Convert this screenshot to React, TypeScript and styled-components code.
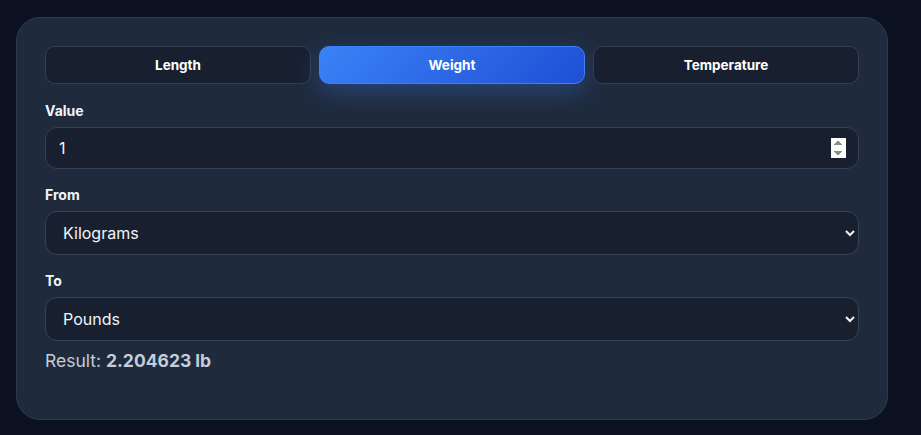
import { useState } from 'react';
import styled, { createGlobalStyle } from 'styled-components';

const GlobalStyle = createGlobalStyle`
  html, body {
    margin: 0;
    padding: 0;
    background: #0b1120;
  }
  body {
    font-family: Inter, "Noto Sans", "Liberation Sans", sans-serif;
    color: #f1f5f9;
  }
`;

const Page = styled.div`
  min-height: 435px;
  padding: 17px 33px 0 16px;
  box-sizing: border-box;
`;

const Card = styled.div`
  background: #1f2a3c;
  border: 1px solid #2e3a4d;
  border-radius: 24px;
  padding: 28px 28px 46px;
  box-sizing: border-box;
  width: 872px;
`;

const Tabs = styled.div`
  display: grid;
  grid-template-columns: repeat(3, 1fr);
  gap: 8px;
  margin-bottom: 17px;
`;

const Tab = styled.button<{ $active?: boolean }>`
  height: 38px;
  border-radius: 10px;
  font-family: inherit;
  font-size: 13.5px;
  font-weight: 700;
  color: #ffffff;
  cursor: pointer;
  border: 1px solid ${(p) => (p.$active ? '#3b82f6' : '#343f51')};
  background: ${(p) =>
    p.$active ? 'linear-gradient(135deg, #3b82f6 0%, #1f4fd6 100%)' : '#182030'};
  box-shadow: ${(p) => (p.$active ? '0 8px 26px rgba(59, 130, 246, 0.32)' : 'none')};
`;

const Field = styled.div`
  display: flex;
  flex-direction: column;
  margin-bottom: 16px;
`;

const Label = styled.label`
  font-size: 14px;
  line-height: 20px;
  font-weight: 700;
  color: #f1f5f9;
  margin-bottom: 6px;
`;

const Input = styled.input`
  height: 42px;
  box-sizing: border-box;
  background: #182030;
  border: 1px solid #364152;
  border-radius: 12px;
  padding: 0 12px 0 13px;
  font-family: inherit;
  font-size: 16px;
  color: #f1f5f9;
  outline: none;

  &::-webkit-inner-spin-button,
  &::-webkit-outer-spin-button {
    opacity: 1;
  }
`;

const Select = styled.select`
  height: 44px;
  box-sizing: border-box;
  background: #182030;
  border: 1px solid #364152;
  border-radius: 12px;
  padding: 0 8px 0 13px;
  font-family: inherit;
  font-size: 16px;
  color: #f1f5f9;
  outline: none;
`;

const Result = styled.div`
  margin-top: -8px;
  font-size: 17.5px;
  line-height: 24px;
  color: #c3cddb;

  strong {
    font-weight: 700;
  }
`;

const tabs = ['Length', 'Weight', 'Temperature'];

export default function App() {
  const [active, setActive] = useState('Weight');
  const [value, setValue] = useState('1');

  return (
    <>
      <GlobalStyle />
      <Page>
        <Card>
          <Tabs>
            {tabs.map((t) => (
              <Tab key={t} $active={t === active} onClick={() => setActive(t)}>
                {t}
              </Tab>
            ))}
          </Tabs>
          <Field>
            <Label>Value</Label>
            <Input type="number" value={value} onChange={(e) => setValue(e.target.value)} />
          </Field>
          <Field>
            <Label>From</Label>
            <Select defaultValue="kg">
              <option value="kg">Kilograms</option>
              <option value="lb">Pounds</option>
            </Select>
          </Field>
          <Field>
            <Label>To</Label>
            <Select defaultValue="lb">
              <option value="kg">Kilograms</option>
              <option value="lb">Pounds</option>
            </Select>
          </Field>
          <Result>
            Result: <strong>2.204623 lb</strong>
          </Result>
        </Card>
      </Page>
    </>
  );
}
